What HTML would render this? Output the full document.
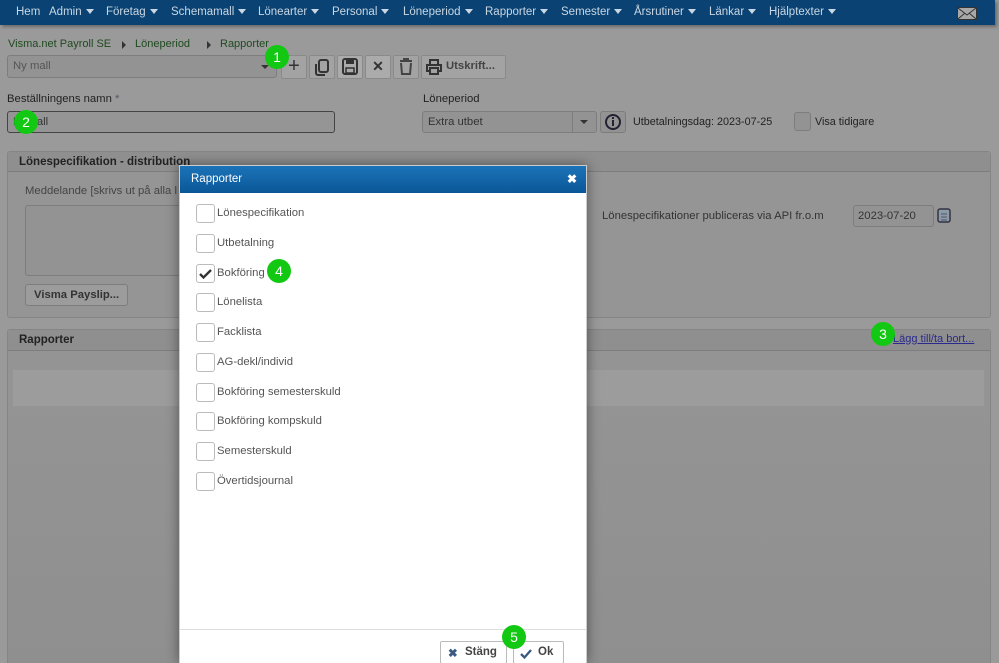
<!DOCTYPE html>
<html><head><meta charset="utf-8"><style>
*{box-sizing:border-box;margin:0;padding:0}
html,body{width:999px;height:663px;overflow:hidden}
body{background:#9a9a9a;font-family:"Liberation Sans",Arial,sans-serif;font-size:11.3px;color:#333;position:relative}
.abs{position:absolute}
.nav{left:0;top:0;width:995px;height:25px;background:#0a4373;box-shadow:2px 2px 3px rgba(0,0,0,.3)}
.nav span{position:absolute;top:6px;color:#c9d6e3;font-size:11.5px;white-space:nowrap}
.caret{display:inline-block;width:0;height:0;border-left:4.5px solid transparent;border-right:4.5px solid transparent;border-top:5px solid #c9d6e3;margin-left:4px;vertical-align:1px}
.bc{top:38px;color:#1f4a1f;font-size:11px}
.tri{display:inline-block;border-top:4px solid transparent;border-bottom:4px solid transparent;border-left:4px solid #333}
.inp{border:1px solid #7d7d7d;border-radius:3px;background:#939393}
.btn{border:1px solid #8a8a8a;border-radius:2px;background:#a3a3a3;height:24px;top:55px}
.badge{width:24px;height:24px;border-radius:50%;background:#12c812;color:#fff;font-size:14px;text-align:center;line-height:24px}
.panel{border:1px solid #858585;border-radius:3px;background:#959595}
.ph{height:20px;background:#8f8f8f;border-bottom:1px solid #7d7d7d;font-weight:bold;padding:4px 11px;font-size:11.5px;color:#222}
.dlg{left:179px;top:165px;width:408px;height:498px;background:#fff;box-shadow:0 0 12px rgba(0,0,0,.45);border:1px solid #ccc;border-bottom:none}
.dh{height:27px;background:linear-gradient(#1c73b8,#0a5797);color:#fff;font-size:11.5px;padding:7px 11px}
.cb{position:absolute;left:196px;width:19px;height:19px;border:1px solid #bbb;border-radius:3px;background:#fff}
.lbl{position:absolute;left:217px;font-size:11.3px;color:#555}
.fb{border:1px solid #bbb;border-radius:2px;background:#fff;height:23px;top:641px;font-weight:bold;color:#444;font-size:11.5px;padding:4px 0 0 0}
</style></head><body>
<div class="abs nav">
<span style="left:16px">Hem</span>
<span style="left:49px">Admin<i class="caret"></i></span>
<span style="left:106px">Företag<i class="caret"></i></span>
<span style="left:171px">Schemamall<i class="caret"></i></span>
<span style="left:258px">Lönearter<i class="caret"></i></span>
<span style="left:332px">Personal<i class="caret"></i></span>
<span style="left:403px">Löneperiod<i class="caret"></i></span>
<span style="left:485px">Rapporter<i class="caret"></i></span>
<span style="left:561px">Semester<i class="caret"></i></span>
<span style="left:634px">Årsrutiner<i class="caret"></i></span>
<span style="left:709px">Länkar<i class="caret"></i></span>
<span style="left:769px">Hjälptexter<i class="caret"></i></span>
<svg class="abs" style="left:957px;top:7px" width="20" height="13" viewBox="0 0 20 13"><rect x=".5" y=".5" width="19" height="12" fill="#a8a8a8" stroke="#333"/><path d="M1 1l9 7 9-7M1 12l7-6M19 12l-7-6" fill="none" stroke="#333"/></svg>
</div>
<div class="abs bc" style="left:8px">Visma.net Payroll SE</div>
<i class="abs tri" style="left:122px;top:41px"></i>
<div class="abs bc" style="left:135px">Löneperiod</div>
<i class="abs tri" style="left:207px;top:41px"></i>
<div class="abs bc" style="left:220px">Rapporter</div>
<div class="abs inp" style="left:7px;top:55px;width:270px;height:23px;color:#555;padding:4px 5px">Ny mall<span class="abs" style="right:7px;top:9px;border-left:4px solid transparent;border-right:4px solid transparent;border-top:4px solid #333"></span></div>
<div class="abs btn" style="left:281px;width:26px;font-size:20px;text-align:center;line-height:20px;color:#333">+</div>
<div class="abs btn" style="left:309px;width:26px"><svg width="24" height="22" viewBox="0 0 24 22"><rect x="9" y="4" width="9" height="12" rx="2" fill="none" stroke="#333" stroke-width="2"/><path d="M6 8v9a2 2 0 0 0 2 2h7" fill="none" stroke="#333" stroke-width="2"/></svg></div>
<div class="abs btn" style="left:337px;width:26px;background:#ababab"><svg width="24" height="22" viewBox="0 0 24 22"><rect x="5" y="3" width="14" height="15" rx="2" fill="none" stroke="#333" stroke-width="2"/><rect x="8" y="4" width="8" height="4" fill="#333"/><rect x="8" y="12" width="8" height="5" fill="none" stroke="#333" stroke-width="1.5"/></svg></div>
<div class="abs btn" style="left:365px;width:26px;background:#ababab;text-align:center;font-weight:bold;font-size:14px;line-height:21px;color:#333">✕</div>
<div class="abs btn" style="left:393px;width:26px"><svg width="24" height="22" viewBox="0 0 24 22"><path d="M6 5h12M10 5V3h4v2M7 7l1 11h8l1-11" fill="none" stroke="#444" stroke-width="2"/></svg></div>
<div class="abs btn" style="left:421px;width:85px;font-weight:bold;color:#444;padding:4px 0 0 24px">Utskrift...<svg class="abs" style="left:3px;top:2px" width="18" height="18" viewBox="0 0 18 18"><path d="M5 6V2h8v4M4 13H2V7h14v6h-2M5 10h8v6H5z" fill="none" stroke="#333" stroke-width="2"/></svg></div>
<div class="abs badge" style="left:265px;top:45px">1</div>
<div class="abs" style="left:7px;top:93px;color:#222">Beställningens namn <span style="color:#556">*</span></div>
<div class="abs" style="left:7px;top:111px;width:328px;height:22px;border:1px solid #444;border-radius:3px;background:#959595;padding:4px 5px;color:#333">N&nbsp;&nbsp;&nbsp;&nbsp;&nbsp;all</div>
<div class="abs badge" style="left:14px;top:110px">2</div>
<div class="abs" style="left:423px;top:93px;color:#222">Löneperiod</div>
<div class="abs inp" style="left:422px;top:111px;width:175px;height:22px;padding:4px 5px;color:#333">Extra utbet<span class="abs" style="left:149px;top:0;height:20px;border-left:1px solid #7d7d7d;width:1px"></span><span class="abs" style="right:8px;top:8px;border-left:4px solid transparent;border-right:4px solid transparent;border-top:4px solid #333"></span></div>
<div class="abs inp" style="left:600px;top:111px;width:26px;height:22px"><svg width="24" height="20" viewBox="0 0 24 20"><circle cx="12" cy="10" r="7" fill="none" stroke="#223" stroke-width="2"/><rect x="11" y="8" width="2" height="6" fill="#223"/><rect x="11" y="5" width="2" height="2" fill="#223"/></svg></div>
<div class="abs" style="left:633px;top:116px;color:#222;font-size:10.8px">Utbetalningsdag: 2023-07-25</div>
<div class="abs inp" style="left:794px;top:112px;width:17px;height:19px"></div>
<div class="abs" style="left:815px;top:116px;color:#222;font-size:10.8px">Visa tidigare</div>

<div class="abs panel" style="left:7px;top:151px;width:984px;height:167px">
<div class="ph">Lönespecifikation - distribution</div>
</div>
<div class="abs" style="left:25px;top:185px;color:#444">Meddelande [skrivs ut på alla l</div>
<div class="abs inp" style="left:25px;top:205px;width:160px;height:71px"></div>
<div class="abs" style="left:25px;top:284px;width:103px;height:22px;border:1px solid #7d7d7d;border-radius:3px;background:#9c9c9c;font-weight:bold;color:#333;padding:4px 0 0 8px">Visma Payslip...</div>
<div class="abs" style="left:602px;top:210px;color:#333">Lönespecifikationer publiceras via API fr.o.m</div>
<div class="abs inp" style="left:853px;top:205px;width:81px;height:22px;padding:4px 4px;color:#333">2023-07-20</div>
<svg class="abs" style="left:937px;top:207px" width="14" height="16" viewBox="0 0 14 16"><rect x="1" y="2" width="12" height="13" rx="2" fill="#8a9aa8" stroke="#334" stroke-width="1.5"/><path d="M4 7h6M4 10h6M4 13h6" stroke="#556" stroke-width="1"/></svg>

<div class="abs panel" style="left:7px;top:329px;width:984px;height:340px;background:linear-gradient(#959595,#8f8f8f)">
<div class="ph" style="height:21px">Rapporter</div>
<div style="margin:19px 0 0 5px;height:36px;width:971px;background:#9c9c9c"></div>
</div>
<div class="abs" style="left:893px;top:333px;color:#2a2a8a;text-decoration:underline;font-size:11px">Lägg till/ta bort...</div>
<div class="abs badge" style="left:871px;top:322px">3</div>

<div class="abs dlg">
<div class="dh">Rapporter<span style="position:absolute;right:9px;top:6px;font-weight:bold;font-size:12px">✖</span></div>
<div style="position:absolute;left:0;right:0;top:463px;border-top:1px solid #ddd"></div>
</div>
<div class="cb" style="top:204px"></div><div class="lbl" style="top:207px">Lönespecifikation</div>
<div class="cb" style="top:234px"></div><div class="lbl" style="top:237px">Utbetalning</div>
<div class="cb" style="top:264px"><svg width="17" height="17" viewBox="0 0 17 17"><path d="M3 9l3.5 3.5L14 5" fill="none" stroke="#333" stroke-width="2.3"/></svg></div><div class="lbl" style="top:267px">Bokföring</div>
<div class="abs badge" style="left:267px;top:259px">4</div>
<div class="cb" style="top:293px"></div><div class="lbl" style="top:296px">Lönelista</div>
<div class="cb" style="top:323px"></div><div class="lbl" style="top:326px">Facklista</div>
<div class="cb" style="top:353px"></div><div class="lbl" style="top:356px">AG-dekl/individ</div>
<div class="cb" style="top:383px"></div><div class="lbl" style="top:386px">Bokföring semesterskuld</div>
<div class="cb" style="top:412px"></div><div class="lbl" style="top:415px">Bokföring kompskuld</div>
<div class="cb" style="top:442px"></div><div class="lbl" style="top:445px">Semesterskuld</div>
<div class="cb" style="top:472px"></div><div class="lbl" style="top:475px">Övertidsjournal</div>
<div class="abs fb" style="left:440px;width:67px;padding-left:24px"><span class="abs" style="left:7px;top:4px;color:#3a5a80">✖</span>Stäng</div>
<div class="abs fb" style="left:513px;width:51px;padding-left:24px"><svg class="abs" style="left:5px;top:5px" width="14" height="13" viewBox="0 0 14 13"><path d="M2 7l3.5 3.5L12 3" fill="none" stroke="#3a5a80" stroke-width="2.3"/></svg>Ok</div>
<div class="abs badge" style="left:502px;top:625px">5</div>
</body></html>
